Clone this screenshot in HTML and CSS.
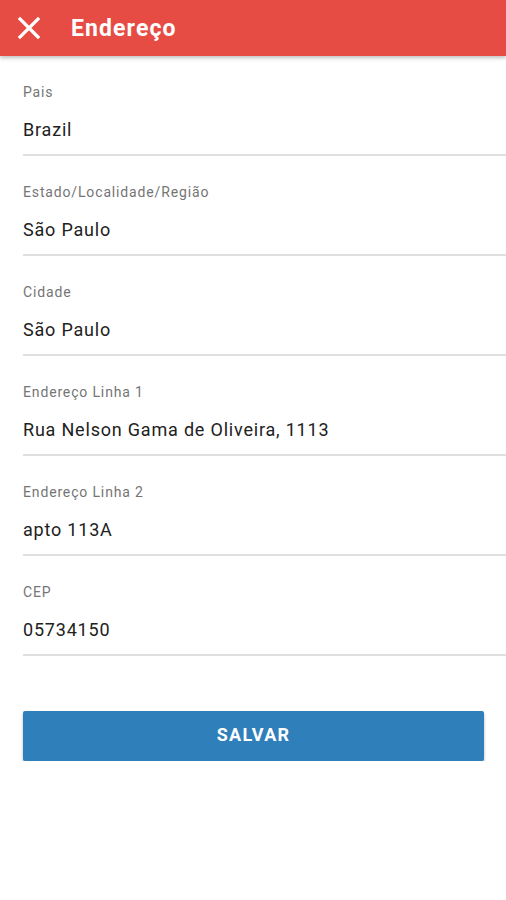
FILE: index.html
```html
<!DOCTYPE html>
<html lang="pt-BR">
<head>
    <meta charset="UTF-8">
    <meta name="viewport" content="width=device-width, initial-scale=1.0">
    <title>Endereço</title>
    <link rel="stylesheet" href="styles.css">
</head>
<body>
    <header class="app-bar">
        <button class="close-btn" title="Fechar">
            <svg width="24" height="24" viewBox="0 0 24 24">
                <path d="M3 3 L21 21 M21 3 L3 21" stroke="#fff" stroke-width="3.2" stroke-linecap="square" fill="none"/>
            </svg>
        </button>
        <h1>Endereço</h1>
    </header>

    <main class="address-form">
        <div class="field">
            <label>Pais</label>
            <div class="value">Brazil</div>
        </div>
        <div class="field">
            <label>Estado/Localidade/Região</label>
            <div class="value">São Paulo</div>
        </div>
        <div class="field">
            <label>Cidade</label>
            <div class="value">São Paulo</div>
        </div>
        <div class="field">
            <label>Endereço Linha 1</label>
            <div class="value">Rua Nelson Gama de Oliveira, 1113</div>
        </div>
        <div class="field">
            <label>Endereço Linha 2</label>
            <div class="value">apto 113A</div>
        </div>
        <div class="field">
            <label>CEP</label>
            <div class="value">05734150</div>
        </div>

        <div class="actions">
            <button class="save-btn">SALVAR</button>
        </div>
    </main>
</body>
</html>
```

FILE: styles.css
```css
body {
    margin: 0;
    font-family: Roboto, "Noto Sans", sans-serif;
    background-color: #fff;
    color: #212121;
}

.app-bar {
    height: 56px;
    background-color: #e74c44;
    display: flex;
    align-items: center;
    box-shadow: 0 2px 4px rgba(0,0,0,0.25);
    position: relative;
    z-index: 2;
}

.close-btn {
    background: none;
    border: none;
    padding: 0;
    margin-left: 17px;
    width: 24px;
    height: 24px;
    display: flex;
    cursor: pointer;
}

.app-bar h1 {
    margin: 0 0 0 30px;
    color: #fff;
    font-size: 23px;
    font-weight: 700;
    letter-spacing: 1.1px;
}

.address-form {
    padding-left: 23px;
}

.field {
    padding-top: 26px;
    padding-bottom: 12px;
    border-bottom: 2px solid #e0e0e0;
    display: flex;
    flex-direction: column;
    gap: 16px;
}

.field label {
    font-size: 14px;
    line-height: 20px;
    color: #757575;
    letter-spacing: 0.85px;
}

.field .value {
    font-size: 18px;
    line-height: 24px;
    color: #212121;
    letter-spacing: 0.8px;
}

.actions {
    padding: 55px 22px 0 0;
}

.save-btn {
    width: 100%;
    height: 50px;
    padding: 0 0 3px;
    border: none;
    border-radius: 2px;
    background-color: #2e7fba;
    color: #fff;
    font-family: Roboto, sans-serif;
    font-size: 18px;
    font-weight: 700;
    letter-spacing: 1.3px;
    box-shadow: 0 2px 3px rgba(0,0,0,0.3);
    cursor: pointer;
}
```
